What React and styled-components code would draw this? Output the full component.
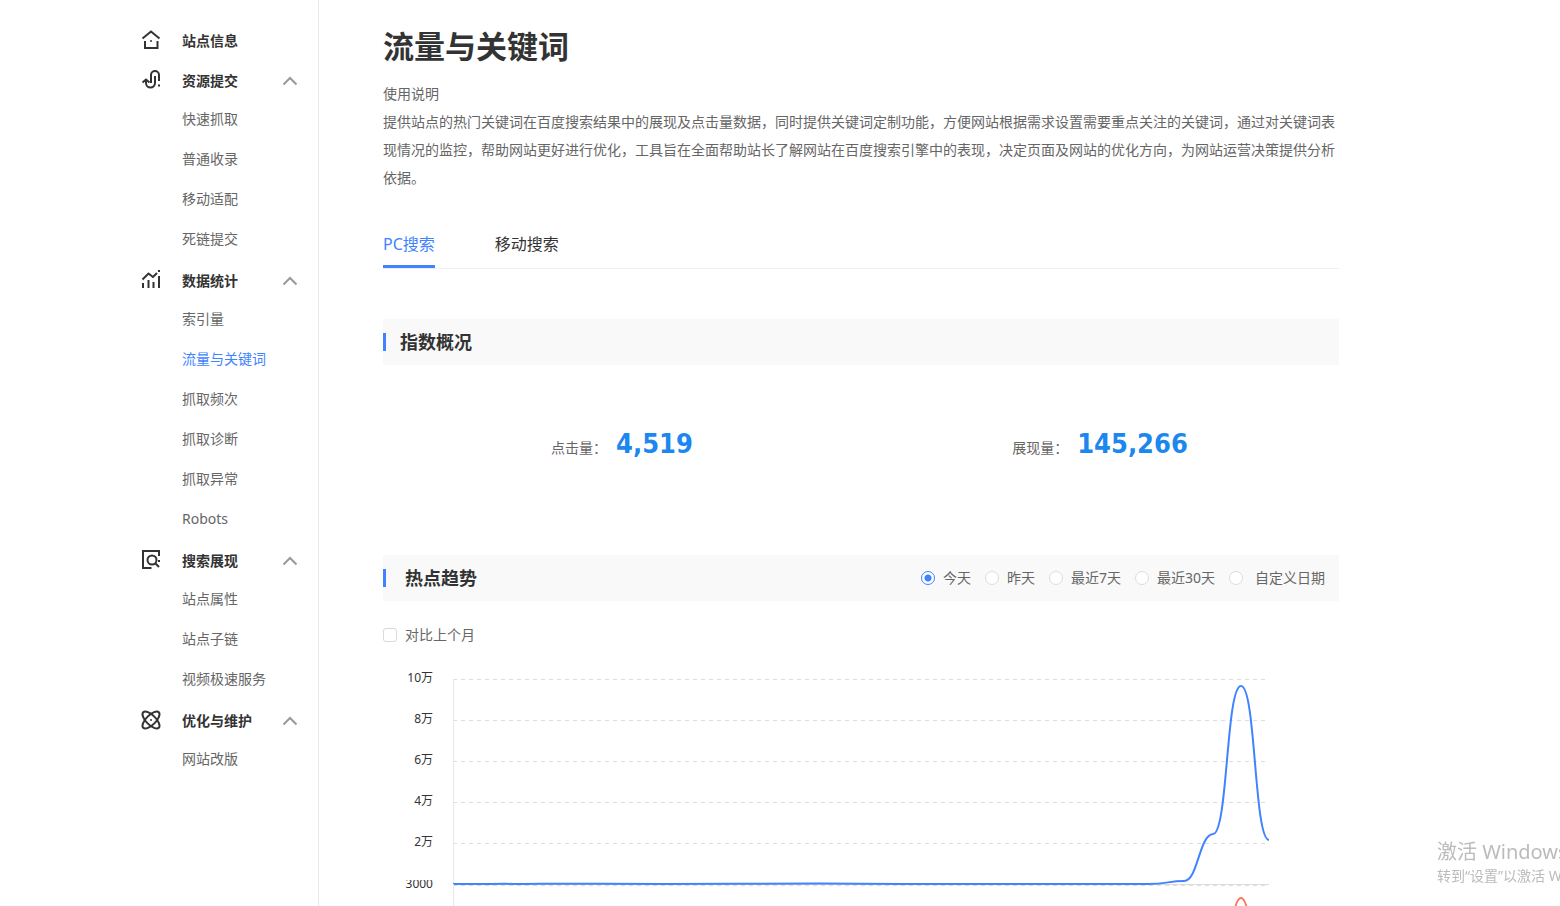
import React, { useState } from "react";
import styled, { createGlobalStyle } from "styled-components";

const GlobalStyle = createGlobalStyle`
  * {
    box-sizing: border-box;
  }

  body {
    margin: 0;
    background: #fff;
    color: #666;
    font-family: "Noto Sans", "Noto Sans CJK SC", sans-serif;
    font-size: 14px;
  }
`;

const Page = styled.div`
  display: flex;
  height: 100vh;
  overflow: hidden;
`;

const Sidebar = styled.nav`
  flex: 0 0 319px;
  padding: 20px 20px 0 140px;
  border-right: 1px solid #ebebeb;
`;

const GroupButton = styled.button`
  display: flex;
  align-items: center;
  width: 100%;
  height: 40px;
  padding: 0;
  border: none;
  background: none;
  color: #333;
  font: inherit;
  font-weight: bold;
  text-align: left;
  cursor: pointer;
`;

const GroupName = styled.span`
  flex: 1;
  margin-left: 20px;
`;

const IconSvg = styled.svg`
  width: 22px;
  height: 22px;
  fill: none;
  stroke: #333;
  stroke-width: 2;
`;

const ChevronSvg = styled.svg`
  width: 16px;
  height: 10px;
  margin-top: 2px;
  fill: none;
  stroke: #999;
  stroke-width: 2;
  transform: ${(props) => (props.$open ? "none" : "rotate(180deg)")};
`;

const ItemList = styled.ul`
  margin: 0;
  padding: 0;
  list-style: none;
`;

const ItemLink = styled.a`
  display: block;
  height: 40px;
  padding-left: 42px;
  line-height: 38px;
  color: ${(props) => (props.$active ? "#4083ff" : "#666")};
  text-decoration: none;
`;

const Main = styled.main`
  flex: 1;
  min-width: 0;
  padding: 26px 221px 0 64px;
`;

const Title = styled.h1`
  margin: 0 0 14px;
  font-size: 31px;
  line-height: 40px;
  color: #333;
`;

const Description = styled.p`
  margin: 0;
  line-height: 28px;
`;

const Tabs = styled.div`
  display: flex;
  gap: 60px;
  margin: 28px 0 50px;
  border-bottom: 1px solid #f0f0f0;
`;

const Tab = styled.button`
  height: 48px;
  padding: 0;
  border: none;
  border-bottom: 3px solid ${(props) => (props.$active ? "#4083ff" : "transparent")};
  background: none;
  color: ${(props) => (props.$active ? "#4083ff" : "#333")};
  font: inherit;
  font-size: 16px;
  cursor: pointer;
`;

const SectionHeader = styled.div`
  display: flex;
  align-items: center;
  height: 46px;
  padding-right: 14px;
  background: #f9f9f9;
`;

const SectionTitle = styled.h2`
  display: flex;
  align-items: center;
  gap: ${(props) => (props.$wide ? "19px" : "14px")};
  margin: 0;
  font-size: 18px;
  line-height: 28px;
  color: #333;

  &::before {
    content: "";
    width: 3px;
    height: 18px;
    background: #4083ff;
  }
`;

const Stats = styled.div`
  display: flex;
  height: 190px;
  padding-top: 59px;
`;

const Stat = styled.div`
  flex: 1;
  display: flex;
  justify-content: center;
  align-items: baseline;
  gap: 9px;
  line-height: 40px;
`;

const StatValue = styled.strong`
  font-family: "DejaVu Sans Condensed", "DejaVu Sans", sans-serif;
  font-size: 27px;
  color: #1c87ee;
`;

const RadioGroup = styled.div`
  display: flex;
  gap: 14px;
  margin-left: auto;
`;

const Choice = styled.label`
  display: flex;
  align-items: center;
  gap: ${(props) => (props.$wide ? "12px" : "8px")};
  line-height: 28px;
  cursor: pointer;
`;

const Radio = styled.input`
  appearance: none;
  width: 14px;
  height: 14px;
  margin: 0;
  border: 1px solid #ddd;
  border-radius: 50%;
  background: #fff;

  &:checked {
    border-color: #4083ff;
    background: radial-gradient(#4083ff 3px, #fff 4px);
  }
`;

const Checkbox = styled.input`
  appearance: none;
  width: 14px;
  height: 14px;
  margin: 0;
  border: 1px solid #d9d9d9;
  border-radius: 3px;
  background: #fff;

  &:checked {
    border-color: #4083ff;
    background: #4083ff;
  }
`;

const CompareRow = styled.div`
  display: flex;
  margin: 20px 0;
`;

const ChartSvg = styled.svg`
  display: block;
  width: 100%;
  overflow: ${(props) => (props.$clip ? "hidden" : "visible")};
  fill: none;

  text {
    fill: #333;
    font-size: 12px;
    text-anchor: end;
  }
`;

const Watermark = styled.div`
  position: fixed;
  right: 0;
  bottom: 19px;
  width: 123px;
  overflow: hidden;
  white-space: nowrap;
  color: #bbb;
  line-height: 22px;
  pointer-events: none;
`;

const WatermarkTitle = styled.div`
  font-size: 20px;
  line-height: 26px;
`;

const icons = {
  home: (
    <>
      <path d="M2.5 9.5 11 2.5l8.500 7M5 12v7h12.500v-7" />
      <circle cx="11" cy="12" r="1" fill="#333" stroke="none" />
    </>
  ),
  submit: (
    <>
      <path d="M11 14V6a4 4 0 0 1 8 0v6M15 7v7a4.500 4.500 0 0 1-9 0v-2.500" />
      <path d="M2.500 13.500 6 10.500l3.500 3" />
      <path d="M19 15.500v2" />
    </>
  ),
  stats: (
    <>
      <path d="M3 19v-5M8.500 19v-8M13.500 19v-6M19 19V7M19 1v2" />
      <path d="m2.500 10.500 6-6 4.500 3.500 4-4" />
    </>
  ),
  search: (
    <>
      <path d="M11.500 19H3V2h16v5" />
      <circle cx="12" cy="11" r="4.500" />
      <path d="m15 14 4 4M19 11v2" />
    </>
  ),
  atom: (
    <>
      <ellipse cx="11" cy="11" rx="11" ry="4.800" transform="rotate(45 11 11)" />
      <ellipse cx="11" cy="11" rx="11" ry="4.800" transform="rotate(-45 11 11)" />
      <circle cx="11" cy="11" r="1" fill="#333" stroke="none" />
    </>
  ),
};

const menu = [
  { name: "站点信息", icon: "home" },
  {
    name: "资源提交",
    icon: "submit",
    items: ["快速抓取", "普通收录", "移动适配", "死链提交"],
  },
  {
    name: "数据统计",
    icon: "stats",
    items: ["索引量", "流量与关键词", "抓取频次", "抓取诊断", "抓取异常", "Robots"],
  },
  {
    name: "搜索展现",
    icon: "search",
    items: ["站点属性", "站点子链", "视频极速服务"],
  },
  { name: "优化与维护", icon: "atom", items: ["网站改版"] },
];

const ranges = ["今天", "昨天", "最近7天", "最近30天", "自定义日期"];
const tabs = ["PC搜索", "移动搜索"];
const ticks = ["10万", "8万", "6万", "4万", "2万"];

const MenuGroup = ({ name, icon, items }) => {
  const [open, setOpen] = useState(true);

  return (
    <>
      <GroupButton type="button" onClick={() => setOpen(!open)}>
        <IconSvg viewBox="0 0 22 22">{icons[icon]}</IconSvg>
        <GroupName>{name}</GroupName>
        {items && (
          <ChevronSvg viewBox="0 0 16 10" $open={open}>
            <path d="m1.500 8.500 6.500-6.500 6.500 6.500" />
          </ChevronSvg>
        )}
      </GroupButton>
      {items && open && (
        <ItemList>
          {items.map((item) => (
            <li key={item}>
              <ItemLink href="#" $active={item === "流量与关键词"}>
                {item}
              </ItemLink>
            </li>
          ))}
        </ItemList>
      )}
    </>
  );
};

const ClickChart = () => (
  <ChartSvg viewBox="0 0 956 211">
    {ticks.map((tick, i) => (
      <g key={tick}>
        <text x="50" y={13 + i * 41}>
          {tick}
        </text>
        <path d={`M70 ${10.5 + i * 41}H882`} stroke="#ddd" strokeDasharray="4 4" />
      </g>
    ))}
    <path d="M70.5 10V215" stroke="#e8e8e8" />
    <path d="M70 215.500H886" stroke="#ddd" />
    <path
      d="M70 215C100 215.300 110 214.700 130 214.900S160 214.700 190 214.700S240 215 280 215S400 214.600 436 214.600S480 215 520 215S600 214.700 620 215S650 214.700 670 215H765C785 215 785 212 801 212C815 212 816 166 830 165C845 165 843 17 858 17C873 17 871 171 886 171"
      stroke="#4083ff"
      strokeWidth="2"
    />
  </ChartSvg>
);

const ShowChart = () => (
  <ChartSvg viewBox="0 0 956 211" $clip>
    <text x="50" y="8">
      3000
    </text>
    <path d="M70 5.500H882" stroke="#ddd" strokeDasharray="4 4" />
    <path d="M70.500 4V211" stroke="#e8e8e8" />
    <path
      d="M70 209H801C815 209 816 166 830 165C845 165 843 18 858 18C873 18 871 171 886 171"
      stroke="#ff715e"
      strokeWidth="2"
    />
  </ChartSvg>
);

const App = () => {
  const [tab, setTab] = useState(tabs[0]);
  const [range, setRange] = useState(ranges[0]);
  const [compare, setCompare] = useState(false);

  return (
    <Page>
      <GlobalStyle />
      <Sidebar>
        {menu.map((group) => (
          <MenuGroup key={group.name} {...group} />
        ))}
      </Sidebar>

      <Main>
        <Title>流量与关键词</Title>
        <Description>使用说明</Description>
        <Description>
          提供站点的热门关键词在百度搜索结果中的展现及点击量数据，同时提供关键词定制功能，方便网站根据需求设置需要重点关注的关键词，通过对关键词表现情况的监控，帮助网站更好进行优化，工具旨在全面帮助站长了解网站在百度搜索引擎中的表现，决定页面及网站的优化方向，为网站运营决策提供分析依据。
        </Description>

        <Tabs>
          {tabs.map((name) => (
            <Tab
              key={name}
              type="button"
              $active={name === tab}
              onClick={() => setTab(name)}
            >
              {name}
            </Tab>
          ))}
        </Tabs>

        <SectionHeader>
          <SectionTitle>指数概况</SectionTitle>
        </SectionHeader>
        <Stats>
          <Stat>
            点击量：<StatValue>4,519</StatValue>
          </Stat>
          <Stat>
            展现量：<StatValue>145,266</StatValue>
          </Stat>
        </Stats>

        <SectionHeader>
          <SectionTitle $wide>热点趋势</SectionTitle>
          <RadioGroup>
            {ranges.map((name) => (
              <Choice key={name} $wide={name === "自定义日期"}>
                <Radio
                  type="radio"
                  name="range"
                  checked={name === range}
                  onChange={() => setRange(name)}
                />
                {name}
              </Choice>
            ))}
          </RadioGroup>
        </SectionHeader>

        <CompareRow>
          <Choice>
            <Checkbox
              type="checkbox"
              checked={compare}
              onChange={(e) => setCompare(e.target.checked)}
            />
            对比上个月
          </Choice>
        </CompareRow>

        <ClickChart />
        <ShowChart />
      </Main>

      <Watermark>
        <WatermarkTitle>激活 Windows</WatermarkTitle>
        转到“设置”以激活 Windows。
      </Watermark>
    </Page>
  );
};

export default App;
